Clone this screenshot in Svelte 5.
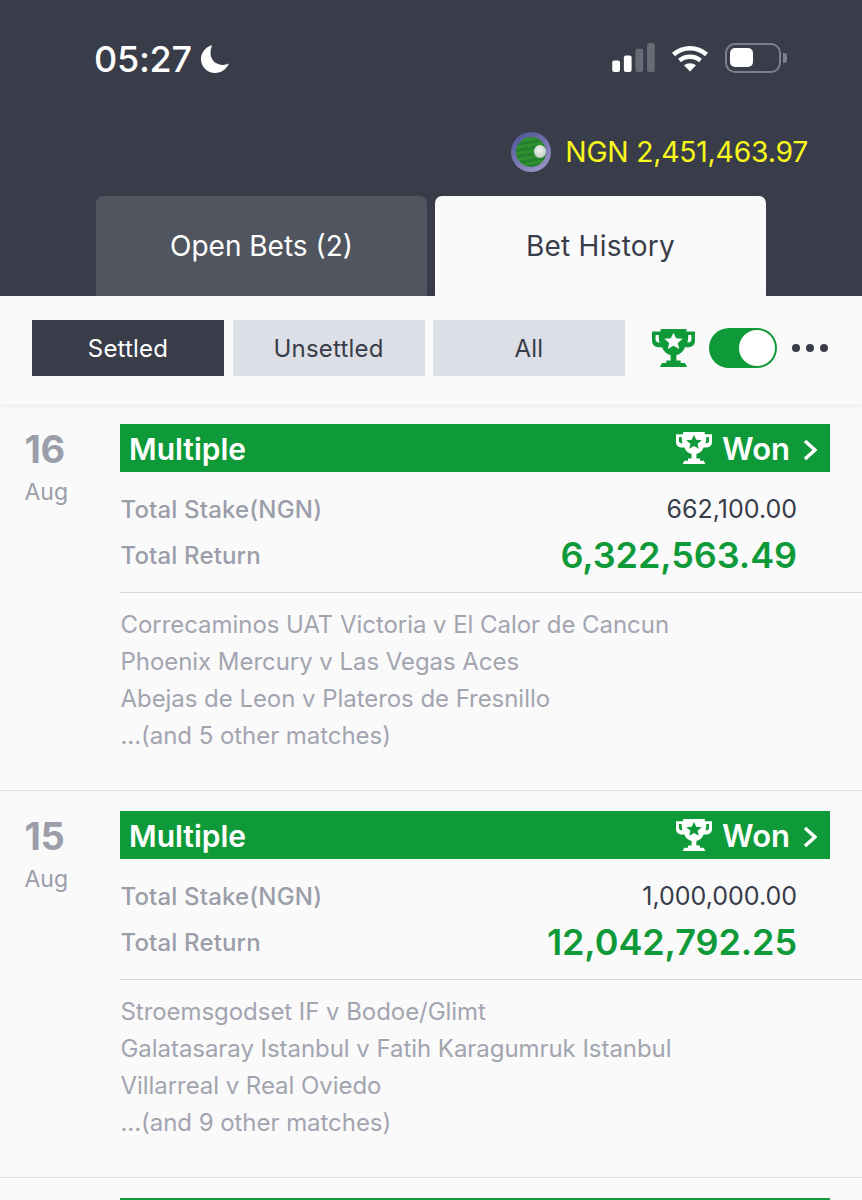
<script>
  const bets = [
    { day: '16', stake: '662,100.00', ret: '6,322,563.49', matches: ['Correcaminos UAT Victoria v El Calor de Cancun', 'Phoenix Mercury v Las Vegas Aces', 'Abejas de Leon v Plateros de Fresnillo', '...(and 5 other matches)'] },
    { day: '15', stake: '1,000,000.00', ret: '12,042,792.25', matches: ['Stroemsgodset IF v Bodoe/Glimt', 'Galatasaray Istanbul v Fatih Karagumruk Istanbul', 'Villarreal v Real Oviedo', '...(and 9 other matches)'] }
  ];
  const trophy = 'M7 1h18v2h6v7c0 3-2 5-5 5h-2c-1 3-3 5-6 6v4h3v2h3l2 4H6l2-4h3v-2h3v-4c-3-1-5-3-6-6H6c-3 0-5-2-5-5V3h6zM3.500 5.500v3.700c0 1.300 1 2 2.800 2.200-.4-1.800-.6-4-.6-5.900zM28.500 5.500h-2.200c0 1.900-.2 4.100-.6 5.900 1.800-.2 2.800-.9 2.800-2.200z';
  const star = 'M16 3.800l1.900 4.300 4.600.4-3.500 3.100 1 4.600-4-2.400-4 2.400 1-4.600-3.500-3.100 4.600-.4z';
</script>

<div class="page">
  <header class="top">
    <div class="status">
      <div class="clock">
        <span>05:27</span>
        <svg class="moon" viewBox="0 0 28 28"><path d="M11 0C5 2 0 7.500 0 14c0 8 6.500 14 14 14 6.500 0 11.500-4 14-9.500-1.800.9-4 1.400-6 1.400-7 0-12.500-5-12.500-12 0-2.600.5-5.200 1.500-7.900z" fill="#fff"/></svg>
      </div>
      <div class="sys">
        <svg class="signal" viewBox="0 0 46 30">
          <rect x="0" y="18" width="8" height="12" rx="2" fill="#fff"/>
          <rect x="12" y="13" width="8" height="17" rx="2" fill="#fff"/>
          <rect x="24" y="6" width="8" height="24" rx="2" fill="#666b76"/>
          <rect x="36" y="0" width="8" height="30" rx="2" fill="#666b76"/>
        </svg>
        <svg class="wifi" viewBox="0 0 38 28" fill="none" stroke="#fff" stroke-width="4.500">
          <path d="M2.500 10.500C12 2 26 2 35.500 10.500"/>
          <path d="M8.500 16.500c6-5 15-5 21 0"/>
          <path d="M19 27.500l-6-6.200c3.500-2.700 8.500-2.700 12 0z" fill="#fff" stroke="none"/>
        </svg>
        <div class="battery"><div class="level"></div></div>
        <div class="cap"></div>
      </div>
    </div>

    <div class="balance">
      <div class="avatar"><span class="ball"></span></div>
      <span>NGN 2,451,463.97</span>
    </div>

    <div class="tabs">
      <div class="tab open">Open Bets (2)</div>
      <div class="tab active">Bet History</div>
    </div>
  </header>

  <section class="filters">
    <div class="seg on">Settled</div>
    <div class="seg">Unsettled</div>
    <div class="seg">All</div>
    <svg class="trophy-green" viewBox="1 1 30 29" preserveAspectRatio="none">
      <path d={trophy} fill="#0f9a39" fill-rule="evenodd"/>
      <path d={star} fill="#fafafb"/>
    </svg>
    <div class="toggle"><div class="knob"></div></div>
    <div class="dots"><i></i><i></i><i></i></div>
  </section>

  <main>
    {#each bets as bet}
      <article class="bet">
        <div class="date">
          <div class="day">{bet.day}</div>
          <div class="month">Aug</div>
        </div>
        <div class="body">
          <div class="banner">
            <span class="type">Multiple</span>
            <span class="won">
              <svg class="trophy-white" viewBox="1 1 30 29" preserveAspectRatio="none">
                <path d={trophy} fill="#fff" fill-rule="evenodd"/>
                <path d={star} fill="#0f9a39"/>
              </svg>
              <span>Won</span>
              <svg class="chev" viewBox="0 0 14 22" fill="none" stroke="#fff" stroke-width="3.600"><path d="M2 2l10 9-10 9"/></svg>
            </span>
          </div>
          <div class="amounts">
            <div class="row stake"><span class="label">Total Stake(NGN)</span><span class="val">{bet.stake}</span></div>
            <div class="row ret"><span class="label">Total Return</span><span class="big">{bet.ret}</span></div>
          </div>
          <ul>
            {#each bet.matches as m}<li>{m}</li>{/each}
          </ul>
        </div>
      </article>
    {/each}
    <div class="next"></div>
  </main>
</div>

<style>
  :global(body) { margin: 0; background: #fafafb; }
  .page { width: 862px; height: 1200px; overflow: hidden; font-family: Inter, "Noto Sans", sans-serif; background: #fafafb; }
  .top { height: 296px; background: #383d49; display: flex; flex-direction: column; box-sizing: border-box; padding-top: 36px; }
  .status { height: 46px; display: flex; justify-content: space-between; align-items: center; padding: 0 75px 0 94px; }
  .clock { display: flex; align-items: center; gap: 9px; color: #fff; font-size: 36px; font-weight: 500; letter-spacing: -.3px; }
  .moon { width: 28px; height: 28px; margin-top: -1px; }
  .sys { display: flex; align-items: center; margin-top: -3px; }
  .signal { width: 45px; height: 29px; margin-right: 14px; }
  .wifi { width: 38px; height: 28px; margin-right: 16px; }
  .battery { width: 56px; height: 30px; box-sizing: border-box; border: 2.500px solid #7c808a; border-radius: 10px; padding: 3px; }
  .level { width: 23px; height: 19px; background: #fff; border-radius: 5px; }
  .cap { width: 4px; height: 10px; margin-left: 2px; background: #7c808a; border-radius: 0 3px 3px 0; }
  .balance { margin-top: 50px; height: 40px; display: flex; align-items: center; justify-content: flex-end; padding-right: 54px; gap: 14px; color: #f8f81c; font-size: 28.300px; letter-spacing: -.2px; }
  .avatar { width: 40px; height: 40px; box-sizing: border-box; border-radius: 50%; border: 5px solid transparent; background: repeating-linear-gradient(170deg, #23802d 0 3px, #2f9030 3px 6px) padding-box, linear-gradient(150deg, #47508f, #a79bcf) border-box; position: relative; }
  .ball { position: absolute; left: 18px; top: 8px; width: 12px; height: 13px; border-radius: 50%; background: radial-gradient(circle at 40% 35%, #eef2ef, #b9c6c0); }
  .tabs { margin-top: auto; display: flex; gap: 8px; padding-left: 96px; }
  .tab { width: 331px; height: 100px; box-sizing: border-box; border-radius: 7px 7px 0 0; display: flex; align-items: center; justify-content: center; font-size: 28px; }
  .open { background: #50555f; color: #fff; }
  .active { background: #fafafb; color: #383d49; letter-spacing: .25px; }

  .filters { height: 108px; box-sizing: border-box; display: flex; align-items: center; padding: 0 0 4px 32px; background: #fafafb; box-shadow: 0 2px 6px rgba(40, 44, 60, .07); position: relative; }
  .seg { width: 192px; height: 56px; margin-right: 8.500px; background: #dcdfe6; color: #383d49; font-size: 24px; letter-spacing: .2px; display: flex; align-items: center; justify-content: center; }
  .seg.on { background: #383d49; color: #fff; }
  .trophy-green { width: 43px; height: 38px; margin-left: 18.500px; margin-right: 14px; }
  .toggle { width: 68px; height: 40px; border-radius: 20px; background: #0f9a39; position: relative; }
  .knob { position: absolute; right: 2px; top: 2px; width: 36px; height: 36px; border-radius: 50%; background: #fff; }
  .dots { display: flex; gap: 6px; margin-left: 15px; }
  .dots i { display: block; width: 8px; height: 8px; border-radius: 50%; background: #383d49; }

  .bet { height: 387px; box-sizing: border-box; padding-top: 20px; display: flex; border-bottom: 1px solid #dfe1e7; }
  .date { width: 120px; box-sizing: border-box; padding-left: 24.500px; color: #9b9ea9; }
  .day { font-size: 38px; font-weight: 700; line-height: 50px; letter-spacing: -.5px; }
  .month { font-size: 23px; line-height: 32px; margin-top: 2px; }
  .body { flex: 1; }
  .banner { width: 710px; height: 48px; background: #0f9a39; color: #fff; display: flex; justify-content: space-between; align-items: center; box-sizing: border-box; padding: 1px 13px 0 9px; font-size: 30px; font-weight: 600; }
  .won { display: flex; align-items: center; font-size: 31px; }
  .trophy-white { width: 36px; height: 32px; margin-right: 10px; margin-top: -1px; }
  .chev { width: 14px; height: 22px; margin-left: 13px; margin-top: 2px; }
  .amounts { border-bottom: 1px solid #d5d8e1; height: 121px; box-sizing: border-box; padding: 14px 65px 0 0.500px; }
  .row { display: flex; justify-content: space-between; align-items: center; }
  .stake { height: 46px; }
  .ret { height: 46px; }
  .label { color: #9b9ea9; font-size: 24px; font-weight: 500; letter-spacing: .15px; }
  .val { color: #383d49; font-size: 25px; letter-spacing: 0; }
  .big { color: #0f9a39; font-size: 36px; font-weight: 600; letter-spacing: -.1px; }
  ul { list-style: none; margin: 0; padding: 13px 0 0 0.500px; color: #a2a5af; font-size: 24px; line-height: 37px; letter-spacing: -.05px; }
  .next { margin: 20px 0 0 120px; width: 710px; height: 48px; background: #0f9a39; }
</style>
